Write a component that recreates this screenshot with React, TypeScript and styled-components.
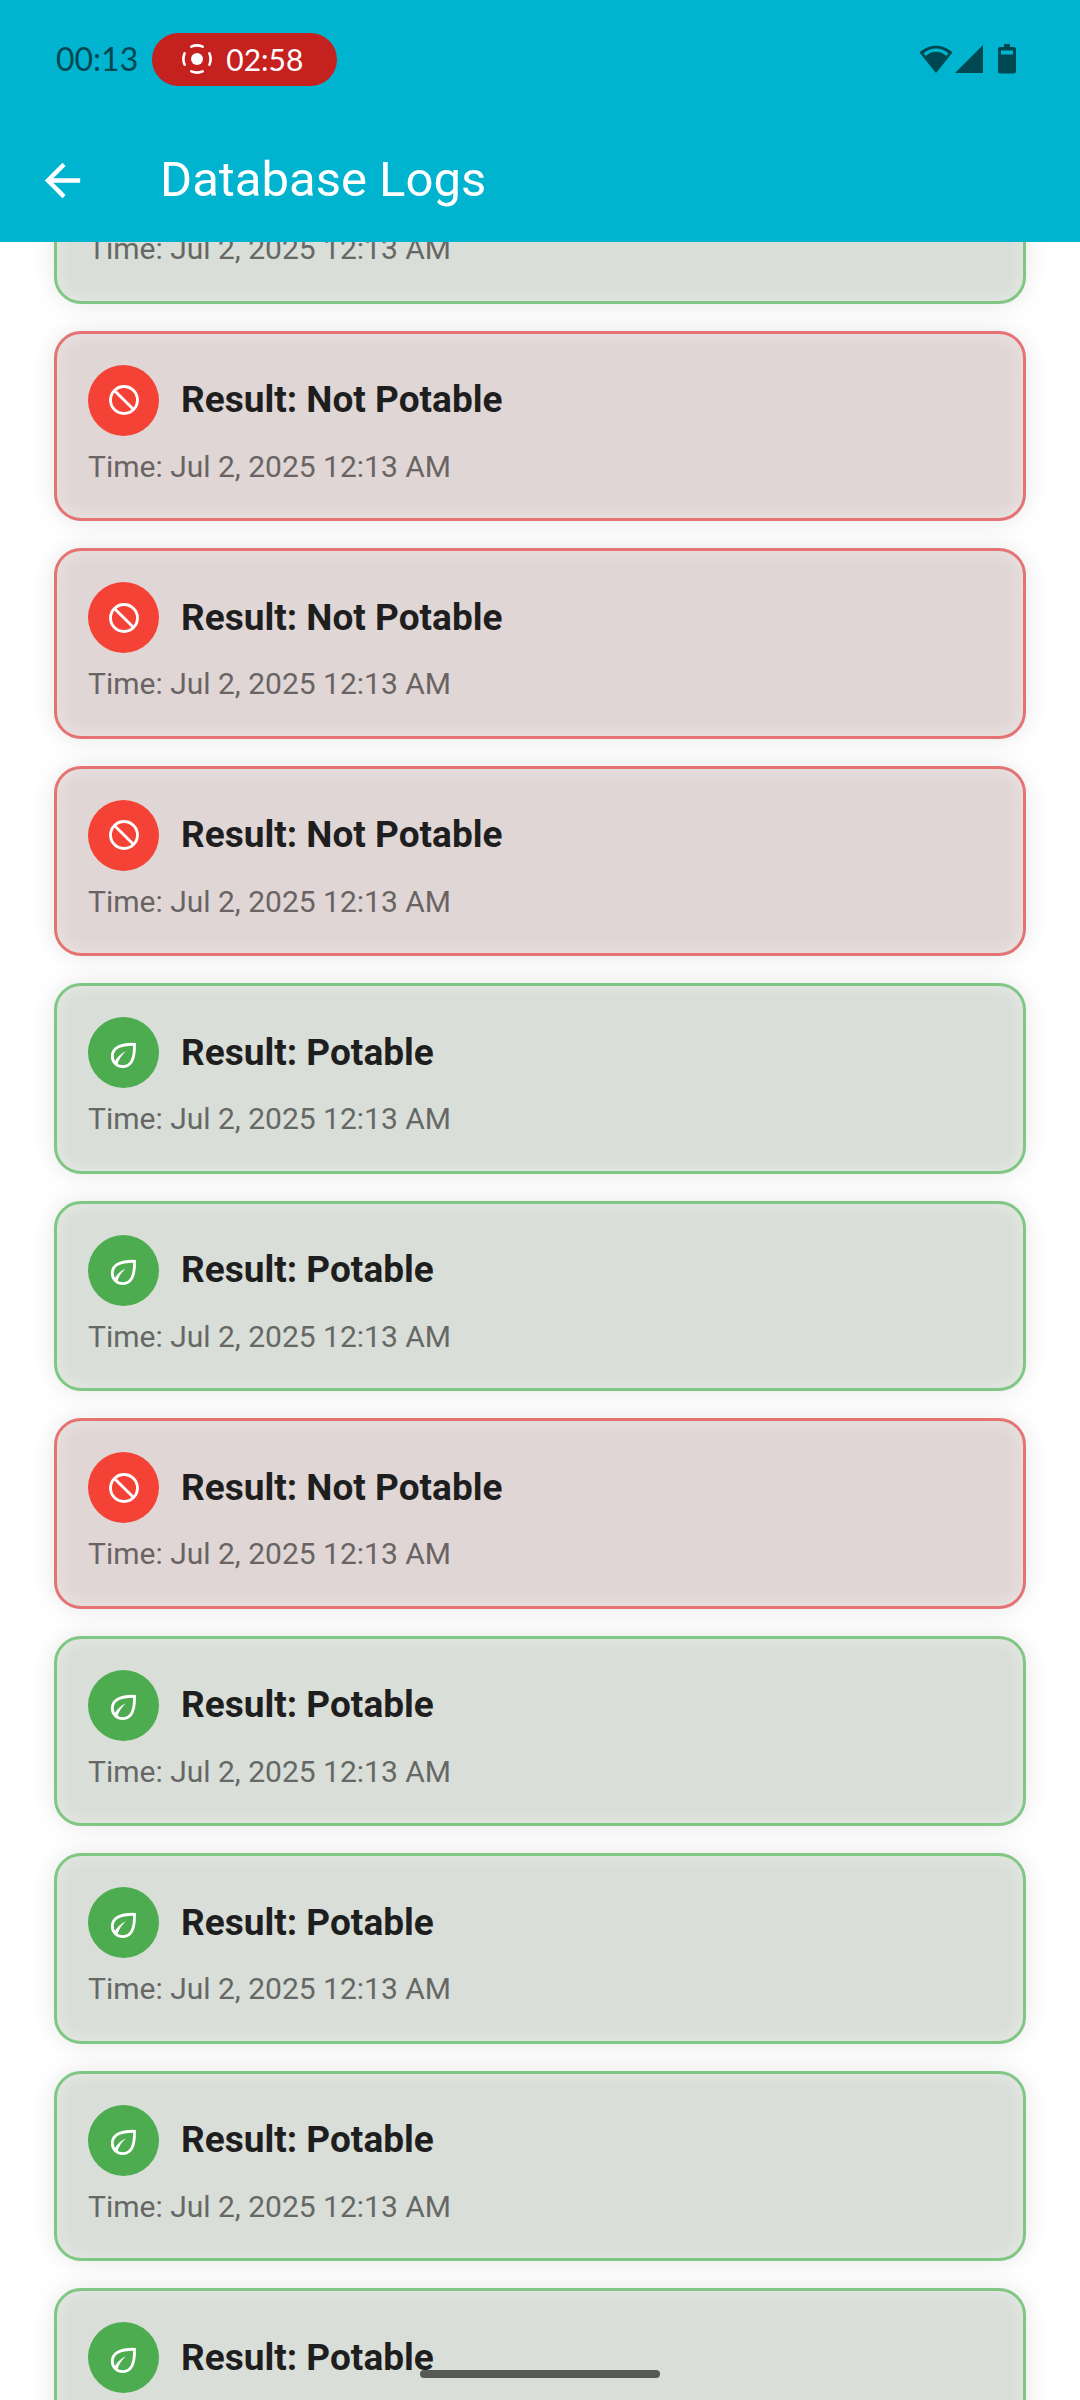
import React, { useLayoutEffect, useRef } from "react";
import styled, { createGlobalStyle } from "styled-components";

const GlobalStyle = createGlobalStyle`
  * { box-sizing: border-box; }
  body {
    margin: 0;
    background: #ffffff;
    font-family: Roboto, "Noto Sans", sans-serif;
  }
`;

const Screen = styled.div`
  display: flex;
  flex-direction: column;
  height: 100vh;
  overflow: hidden;
`;

const Header = styled.header`
  flex: none;
  background: #00b4d0;
  color: #ffffff;
`;

const StatusBar = styled.div`
  display: flex;
  align-items: center;
  justify-content: space-between;
  height: 118px;
  padding: 0 64px 0 56px;
`;

const StatusGroup = styled.div<{ $gap: number }>`
  display: flex;
  align-items: center;
  gap: ${(p) => p.$gap}px;
`;

const Clock = styled.time`
  font: 400 32px/40px Lato, sans-serif;
  color: #004851;
`;

const RecordingPill = styled.div`
  display: flex;
  align-items: center;
  gap: 12px;
  height: 53px;
  padding: 0 34px 0 28px;
  border-radius: 27px;
  background: #c5221f;
  font: 400 30px/40px Lato, sans-serif;
`;

const Toolbar = styled.div`
  display: flex;
  align-items: center;
  gap: 71px;
  height: 124px;
  padding: 0 36px;
`;

const BackButton = styled.button`
  display: flex;
  padding: 0;
  border: 0;
  background: none;
  color: inherit;
  cursor: pointer;
`;

const Title = styled.h1`
  margin: 0;
  font-size: 49px;
  line-height: 56px;
  font-weight: 400;
`;

const Scroller = styled.main`
  flex: 1;
  min-height: 0;
  overflow-y: auto;
  scrollbar-width: none;
`;

const LogList = styled.ul`
  display: flex;
  flex-direction: column;
  gap: 27px;
  margin: 0;
  padding: 26px 54px;
  list-style: none;
`;

const Card = styled.li<{ $potable: boolean }>`
  display: flex;
  flex-direction: column;
  gap: 11px;
  padding: 31px;
  border: 3px solid ${(p) => (p.$potable ? "#81c784" : "#e57373")};
  border-radius: 27px;
  background: ${(p) => (p.$potable ? "#d9ded8" : "#e0d6d5")};
  box-shadow:
    0 0 24px rgba(0, 0, 0, 0.1),
    inset 0 0 18px rgba(255, 255, 255, 0.4);
`;

const CardHead = styled.div`
  display: flex;
  align-items: center;
  gap: 22px;
`;

const Badge = styled.span<{ $potable: boolean }>`
  display: grid;
  place-items: center;
  width: 71px;
  height: 71px;
  border-radius: 50%;
  background: ${(p) => (p.$potable ? "#4cac4f" : "#f44336")};
  color: #ffffff;
`;

const Result = styled.h2`
  margin: 0;
  font-size: 37px;
  line-height: 42px;
  font-weight: 700;
  color: #1e1e1e;
`;

const Timestamp = styled.p<{ $potable: boolean }>`
  margin: 0;
  font-size: 30px;
  line-height: 1.35;
  color: ${(p) => (p.$potable ? "#656865" : "#696463")};
`;

const NavHandle = styled.div`
  position: fixed;
  bottom: 22px;
  left: 50%;
  width: 240px;
  height: 8px;
  border-radius: 4px;
  background: #575955;
  transform: translateX(-50%);
`;

const RecordIcon = () => (
  <svg width="34" height="34" viewBox="0 0 34 34" aria-hidden="true">
    <circle cx="17" cy="17" r="6" fill="currentColor" />
    <circle
      cx="17"
      cy="17"
      r="13.6"
      fill="none"
      stroke="currentColor"
      strokeWidth="2.6"
      strokeLinecap="round"
      pathLength="80"
      strokeDasharray="11 9"
      strokeDashoffset="5.5"
    />
  </svg>
);

const WifiIcon = () => (
  <svg width="34" height="28" viewBox="0 0 34 28" fill="#004851" aria-hidden="true">
    <path
      fillRule="evenodd"
      d="M17 28 .5 7.500C5 3.300 10.700.8 17 .8s12 2.500 16.500 6.700zM4.600 8.200l2.200 2.800C9.500 8.300 13 6.800 17 6.800s7.500 1.500 10.200 4.200l2.200-2.800C25.900 5.200 21.700 3.500 17 3.500S8.100 5.200 4.600 8.200z"
    />
  </svg>
);

const SignalIcon = () => (
  <svg width="28" height="28" viewBox="0 0 28 28" fill="#004851" aria-hidden="true">
    <path d="M0 28 28 0v28z" />
  </svg>
);

const BatteryIcon = () => (
  <svg width="18" height="30" viewBox="0 0 18 30" fill="#004851" aria-hidden="true">
    <path
      fillRule="evenodd"
      d="M6 0h6v3h4q2 0 2 2v22q0 2.500-2.500 2.500h-13Q0 29.500 0 27V5q0-2 2-2h4zM3 6.500v4h12v-4z"
    />
  </svg>
);

const BackIcon = () => (
  <svg width="53" height="53" viewBox="0 0 24 24" fill="currentColor" aria-hidden="true">
    <path d="M20 11H7.830l5.590-5.590L12 4l-8 8 8 8 1.410-1.410L7.830 13H20v-2z" />
  </svg>
);

const BlockIcon = () => (
  <svg
    width="36"
    height="36"
    viewBox="0 0 24 24"
    fill="none"
    stroke="currentColor"
    strokeWidth="1.9"
    aria-hidden="true"
  >
    <circle cx="12" cy="12" r="9" />
    <path d="M5.600 5.600 18.400 18.400" />
  </svg>
);

const LeafIcon = () => (
  <svg width="36" height="36" viewBox="0 0 24 24" aria-hidden="true">
    <path
      d="M19 6.200C9.500 6 4.200 8.600 4.200 14.200c0 4 3.100 6.900 7.200 6.900C16.800 21.100 19.200 16 19 6.200z"
      fill="none"
      stroke="currentColor"
      strokeWidth="1.900"
    />
    <path d="M5.200 18.600C7 15 9.700 12.400 13.400 10.800 10.600 13.200 8.600 16 7.400 20.200z" fill="currentColor" />
  </svg>
);

type Log = { id: number; potable: boolean; time: string };

const RESULTS = [true, false, false, false, true, true, false, true, true, true, true];

const LOGS: Log[] = RESULTS.map((potable, id) => ({
  id,
  potable,
  time: "Jul 2, 2025 12:13 AM",
}));

const INITIAL_SCROLL = 155;

export default function App() {
  const scroller = useRef<HTMLElement>(null);

  useLayoutEffect(() => {
    if (scroller.current) scroller.current.scrollTop = INITIAL_SCROLL;
  }, []);

  return (
    <Screen>
      <GlobalStyle />
      <Header>
        <StatusBar>
          <StatusGroup $gap={14}>
            <Clock>00:13</Clock>
            <RecordingPill>
              <RecordIcon />
              02:58
            </RecordingPill>
          </StatusGroup>
          <StatusGroup $gap={15}>
            <StatusGroup $gap={2}>
              <WifiIcon />
              <SignalIcon />
            </StatusGroup>
            <BatteryIcon />
          </StatusGroup>
        </StatusBar>
        <Toolbar>
          <BackButton type="button" aria-label="Back">
            <BackIcon />
          </BackButton>
          <Title>Database Logs</Title>
        </Toolbar>
      </Header>
      <Scroller ref={scroller}>
        <LogList>
          {LOGS.map((log) => (
            <Card key={log.id} $potable={log.potable}>
              <CardHead>
                <Badge $potable={log.potable}>
                  {log.potable ? <LeafIcon /> : <BlockIcon />}
                </Badge>
                <Result>Result: {log.potable ? "Potable" : "Not Potable"}</Result>
              </CardHead>
              <Timestamp $potable={log.potable}>Time: {log.time}</Timestamp>
            </Card>
          ))}
        </LogList>
      </Scroller>
      <NavHandle />
    </Screen>
  );
}
